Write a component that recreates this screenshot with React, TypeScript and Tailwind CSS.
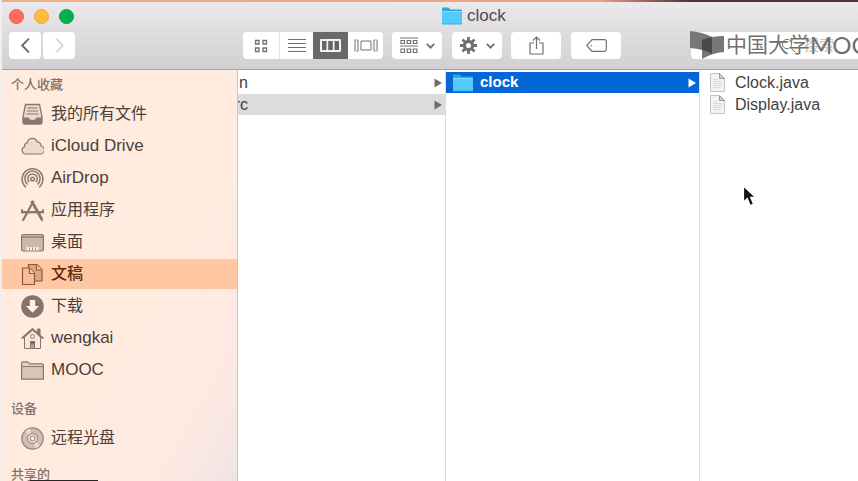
import type { ReactNode } from "react";

const svgBase = { fill: "none", stroke: "currentColor" } as const;

function FolderBlue() {
  return (
    <svg width="20" height="18" viewBox="0 0 20 18" className="shrink-0">
      <path d="M0 1.5Q0 .5 1 .5H6.5L8.5 2.5H19Q20 2.5 20 3.5V17Q20 17.5 19 17.5H1Q0 17.5 0 17Z" fill="#2ba9e0" />
      <path d="M0 4.5H20V16.5H0Z" fill="#55cbfb" />
      <path d="M0 4.5H20" stroke="#7fdcff" />
    </svg>
  );
}

function FileIcon() {
  return (
    <svg width="15" height="19" viewBox="0 0 15 19" className="shrink-0">
      <path d="M.5 .5H9.5L14.5 5.5V18.5H.5Z" fill="#f3f3f3" stroke="#c4c4c4" />
      <path d="M9.5 .5V5.5H14.5Z" fill="#d2d2d2" stroke="#999" />
      <path d="M3 6.5H8M3 8.5H12M3 10.5H12M3 12.5H12M3 14.5H10" stroke="#dadada" />
    </svg>
  );
}

function Triangle() {
  return (
    <svg width="8" height="10" viewBox="0 0 8 10" className="shrink-0" fill="currentColor">
      <path d="M.5 .5L8 5L.5 9.5Z" />
    </svg>
  );
}

function ChevronDown() {
  return (
    <svg width="9" height="6" viewBox="0 0 9 6" {...svgBase} strokeWidth="1.8">
      <path d="M.8 .8L4.5 4.6L8.2 .8" />
    </svg>
  );
}

const sideIcons: Record<string, ReactNode> = {
  all: (
    <>
      <path d="M4.5 1.5H18.5L21 14V19.5Q21 21 19.5 21H3.5Q2 21 2 19.5V14Z" fill="#eadacf" stroke="#8a766d" strokeWidth="1.3" />
      <path d="M2 14.5H7.5Q8.5 17 11.5 17T15.5 14.5H21V19.5Q21 21 19.5 21H3.5Q2 21 2 19.5Z" fill="#8a766d" />
      <path d="M6.5 5H16.5M6 8H17M5.5 11H17.5" stroke="#8a766d" />
    </>
  ),
  cloud: (
    <path d="M4.5 19H18.5A4 4 0 0 0 20 11A3.8 3.8 0 0 0 16.2 6.8A5.2 5.2 0 0 0 6.2 7.8A3.4 3.4 0 0 0 3.6 11.8A3.7 3.7 0 0 0 4.5 19Z" fill="#f0d9cc" stroke="#8a766d" strokeWidth="1.2" />
  ),
  airdrop: (
    <g fill="none" stroke="#8a766d" strokeWidth="1.5">
      <path d="M5 20.2A10.4 10.4 0 1 1 18 20.2" />
      <path d="M6.6 17.5A7.6 7.6 0 1 1 16.4 17.5" />
      <path d="M8.2 15A4.7 4.7 0 1 1 14.8 15" />
      <circle cx="11.5" cy="12" r="1.8" />
    </g>
  ),
  apps: (
    <g fill="none" stroke="#8a766d">
      <path d="M12.5 2L2.5 20.5" strokeWidth="2.2" />
      <path d="M10.5 2L21 20.5" strokeWidth="2.8" />
      <path d="M0 13.2H23" strokeWidth="2.4" />
      <path d="M1 13.5V10M22 13.5V10M1.4 22L3.4 18.5M21.6 22L19.6 18.5" strokeWidth="1.6" />
    </g>
  ),
  desktop: (
    <>
      <rect x=".6" y="3.5" width="21.8" height="16.5" rx="1.5" fill="#ccb8ac" stroke="#8a766d" strokeWidth="1.2" />
      <path d="M1 6H22" stroke="#8a766d" strokeWidth="1.3" />
      <path d="M5.5 16H17.5V19.4H5.5Z" fill="#fff1e8" />
      <path d="M8.5 16.5V19.4M11.5 16.5V19.4M14.5 16.5V19.4" stroke="#a08d83" />
    </>
  ),
  docs: (
    <g stroke="#8b5a3e" strokeWidth="1.2">
      <path d="M7.5 1.5H16L21 6.5V18H7.5Z" fill="#dba684" />
      <path d="M15.5 1.5V7H21" fill="#ffc9a5" />
      <path d="M1.5 5H8.5L13.5 10V21.5H1.5Z" fill="#f5be99" />
      <path d="M8.5 5V10.5H13.5" fill="#ffd5b8" />
    </g>
  ),
  download: (
    <>
      <circle cx="11.5" cy="11.5" r="11.3" fill="#85746b" />
      <path d="M8.8 5H14.2V11H18L11.5 17.8L5 11H8.8Z" fill="#fff4ec" />
    </>
  ),
  home: (
    <g stroke="#8a766d">
      <path d="M3.5 10L11.5 3L19.5 10V21.5H3.5Z" fill="#fae7dc" />
      <path d="M.8 11.5L11.5 2L22.2 11.5" fill="none" strokeWidth="2" />
      <path d="M16.5 2H19V8L16.5 6Z" fill="#8a766d" />
      <circle cx="11.5" cy="9.5" r="1.9" fill="#fff1e8" />
      <path d="M9.5 14.5H13.5V21.5H9.5Z" fill="#b5a197" />
      <path d="M9.5 14.5H13.5V17H9.5Z" fill="#77655b" />
    </g>
  ),
  folder: (
    <g stroke="#8a766d" strokeWidth="1.2">
      <path d="M.6 4Q.6 2.8 1.8 2.8H6.5L8.5 4.8H21.2Q22.4 4.8 22.4 6V20H.6Z" fill="#e6d3c7" />
      <path d="M.6 7.5H22.4V20H.6Z" fill="#d7c5ba" />
    </g>
  ),
  disc: (
    <g stroke="#9b877d">
      <circle cx="11.5" cy="11.5" r="10.7" fill="#cfbfb5" strokeWidth="1.3" />
      <path d="M11.5 11.5L4 4.5A10 10 0 0 1 9 1.7ZM11.5 11.5L19 18.5A10 10 0 0 1 14 21.3Z" fill="#eadcd3" stroke="none" />
      <circle cx="11.5" cy="11.5" r="5.2" fill="#dfd0c6" />
      <circle cx="11.5" cy="11.5" r="2.2" fill="#fff" />
    </g>
  ),
};

function SideItem({ icon, label, latin, active }: { icon: string; label: string; latin?: boolean; active?: boolean }) {
  return (
    <li>
      <a
        href="#"
        className={`flex h-[30px] items-center gap-[7px] pl-[19px] ${latin ? "text-[17px]" : "text-base"} ${
          active ? "bg-[#ffc8a2] font-medium text-[#5c2d12]" : "text-[#4b403b]"
        }`}
      >
        <svg width="23" height="23" viewBox="0 0 23 23" className="shrink-0">
          {sideIcons[icon]}
        </svg>
        {label}
      </a>
    </li>
  );
}

function SideHeading({ children }: { children: ReactNode }) {
  return <h2 className="flex h-7 items-center pl-[9px] text-[13px] font-medium text-[#7f716a]">{children}</h2>;
}

function Tool({ label, className, children }: { label: string; className: string; children: ReactNode }) {
  return (
    <button aria-label={label} className={`flex h-[27px] shrink-0 items-center justify-center ${className}`}>
      {children}
    </button>
  );
}

function Toolbar() {
  return (
    <div className="flex pl-[7px] text-[#707070]">
      <div className="flex gap-0.5">
        <Tool label="后退" className="w-8 rounded bg-white">
          <svg width="9" height="15" viewBox="0 0 9 15" {...svgBase} strokeWidth="1.9">
            <path d="M8 .5L1.2 7.5L8 14.5" />
          </svg>
        </Tool>
        <Tool label="前进" className="w-8 rounded bg-white text-[#d4d4d4]">
          <svg width="9" height="15" viewBox="0 0 9 15" {...svgBase} strokeWidth="1.7">
            <path d="M1 .5L7.8 7.5L1 14.5" />
          </svg>
        </Tool>
      </div>
      <div className="ml-[168px] flex overflow-hidden rounded bg-white">
        <Tool label="图标" className="w-[37px] border-r border-[#e6e6e6]">
          <svg width="14" height="14" viewBox="0 0 14 14" {...svgBase} strokeWidth="1.3">
            <path d="M1.5 1.5h3.5v3.5h-3.5zM9 1.5h3.5v3.5h-3.5zM1.5 9h3.5v3.5h-3.5zM9 9h3.5v3.5h-3.5z" />
          </svg>
        </Tool>
        <Tool label="列表" className="w-[33px]">
          <svg width="18" height="13" viewBox="0 0 18 13" {...svgBase}>
            <path d="M0 .5H18M0 4.5H18M0 8.5H18M0 12.5H18" />
          </svg>
        </Tool>
        <Tool label="分栏" className="w-[35px] bg-[#696969] text-white">
          <svg width="21" height="13" viewBox="0 0 21 13">
            <rect width="21" height="13" rx="1" fill="#f4f4f4" />
            <path d="M2 2H6.5V11H2ZM8.2 2H12.8V11H8.2ZM14.5 2H19V11H14.5Z" fill="#666" />
          </svg>
        </Tool>
        <Tool label="封面流" className="w-[35px]">
          <svg width="24" height="13" viewBox="0 0 24 13" {...svgBase}>
            <path d="M1 .5V12.5M2.5 1H4V12H2.5M7 2H17V11H7ZM21.5 1H20V12H21.5M23 .5V12.5" />
          </svg>
        </Tool>
      </div>
      <Tool label="排列" className="ml-[9px] w-[50px] gap-2 rounded bg-white">
        <svg width="18" height="17" viewBox="0 0 18 17" {...svgBase}>
          <path d="M0 1H18M0 9H18" />
          <path d="M1 3.5h3.5v3h-3.5zM7.2 3.5h3.5v3h-3.5zM13.4 3.5h3.5v3h-3.5zM1 12h3.5v3.5h-3.5zM7.2 12h3.5v3.5h-3.5zM13.4 12h3.5v3.5h-3.5z" strokeWidth="1.2" />
        </svg>
        <ChevronDown />
      </Tool>
      <Tool label="操作" className="ml-[10px] w-[50px] gap-[9px] rounded bg-white">
        <svg width="17" height="17" viewBox="-8.5 -8.5 17 17" {...svgBase}>
          <circle r="4.1" strokeWidth="3.2" />
          <path d="M0-5V-8.5M0 5V8.5M-5 0H-8.5M5 0H8.5M3.5-3.5L6-6M-3.5-3.5L-6-6M3.5 3.5L6 6M-3.5 3.5L-6 6" strokeWidth="2.8" />
        </svg>
        <ChevronDown />
      </Tool>
      <Tool label="共享" className="ml-[9px] w-[50px] rounded bg-white">
        <svg width="15" height="19" viewBox="0 0 15 19" {...svgBase} strokeWidth="1.2">
          <path d="M5 7H1V18H14V7H10M7.5 13V1M4 4.5L7.5 1L11 4.5" />
        </svg>
      </Tool>
      <Tool label="标签" className="ml-[10px] w-[50px] rounded bg-white">
        <svg width="21" height="13" viewBox="0 0 21 13" {...svgBase} strokeWidth="1.2">
          <path d="M6 .7H18.5Q20.3 .7 20.3 2.5V10.5Q20.3 12.3 18.5 12.3H6L.8 6.5Z" />
          <circle cx="5.5" cy="6.5" r=".8" fill="currentColor" stroke="none" />
        </svg>
      </Tool>
      <label className="ml-[70px] flex h-[27px] min-w-0 flex-1 items-center gap-2 rounded-l bg-white pl-[90px]">
        <svg width="15" height="15" viewBox="0 0 15 15" {...svgBase} className="shrink-0">
          <circle cx="6" cy="6" r="4.7" />
          <path d="M9.5 9.5L14 14" />
        </svg>
        <input aria-label="搜索" placeholder="搜索" className="min-w-0 flex-1 bg-transparent text-[15px] placeholder:text-[#c4c4c4]" />
      </label>
    </div>
  );
}

function Watermark() {
  return (
    <div className="pointer-events-none absolute top-[31px] left-[688px] flex items-center gap-[2px] text-[#707070]">
      <svg width="34" height="28" viewBox="0 0 34 28" className="shrink-0">
        <path d="M0 0Q12 1 22 6V23Q13 18 0 17Z" fill="#777" />
        <path d="M12 9Q22 5 34 5V21Q22 22 12 28Z" fill="#777" />
        <path d="M12 9Q17 7 22 6V23Q17 20 12 19Z" fill="#4a4a4a" />
      </svg>
      <span className="flex items-center leading-7 whitespace-nowrap">
        <span className="text-[21px]">中国大学</span>
        <span className="font-['Lato','Liberation_Sans',sans-serif] text-2xl leading-7">MOOC</span>
      </span>
    </div>
  );
}

export default function App() {
  return (
    <div className="h-screen overflow-hidden bg-[#efeff0] pl-0.5 font-['Liberation_Sans','Noto_Sans_CJK_SC',sans-serif]">
      <div className="relative flex h-full flex-col">
        <div className="h-0.5 shrink-0 bg-linear-to-r from-[#e9b184] from-10% via-[#eba184] via-70% to-[#54343a] to-80%" />
        <header className="h-[68px] shrink-0 border-b border-[#a5a3a6] bg-linear-to-b from-[#ebe9ec] to-[#d1cfd2]">
          <div className="flex h-[30px] items-center pb-0.5 pl-[7px]">
            <div className="flex gap-[10px]">
              <button aria-label="关闭" className="size-[15px] rounded-full border border-[#ed5f52] bg-[#ff6b5d]" />
              <button aria-label="最小化" className="size-[15px] rounded-full border border-[#efa935] bg-[#ffbb40]" />
              <button aria-label="缩放" className="size-[15px] rounded-full border border-[#08a143] bg-[#05b04b]" />
            </div>
            <h1 className="ml-[368px] flex items-center gap-[5px] text-[17px] text-[#4c4c4c]">
              <FolderBlue />
              clock
            </h1>
          </div>
          <Toolbar />
        </header>
        <div className="flex min-h-0 flex-1">
          <nav className="w-[236px] shrink-0 overflow-hidden border-r border-[#cbc4c1] bg-linear-to-br from-[#ffecdf] from-60% via-[#fde9e2] via-85% to-[#efe4e4] pt-px">
            <SideHeading>个人收藏</SideHeading>
            <ul className="flex flex-col gap-0.5">
              <SideItem icon="all" label="我的所有文件" />
              <SideItem icon="cloud" label="iCloud Drive" latin />
              <SideItem icon="airdrop" label="AirDrop" latin />
              <SideItem icon="apps" label="应用程序" />
              <SideItem icon="desktop" label="桌面" />
              <SideItem icon="docs" label="文稿" active />
              <SideItem icon="download" label="下载" />
              <SideItem icon="home" label="wengkai" latin />
              <SideItem icon="folder" label="MOOC" latin />
            </ul>
            <div className="pt-[10px]">
              <SideHeading>设备</SideHeading>
              <ul>
                <SideItem icon="disc" label="远程光盘" />
              </ul>
            </div>
            <div className="pt-2">
              <SideHeading>共享的</SideHeading>
            </div>
          </nav>
          <main className="flex min-w-0 flex-1 bg-white text-base text-[#3f3f3f]">
            <ul className="flex w-[208px] shrink-0 flex-col gap-px border-r border-[#dcdcdc] pt-0.5">
              {["n", "rc"].map((name, i) => (
                <li key={name}>
                  <button className={`flex h-[21px] w-full items-center justify-between pr-[3px] ${i === 1 ? "bg-[#dcdcdc]" : ""}`}>
                    <span className="flex w-[10px] justify-end overflow-hidden">{name}</span>
                    <span className="text-[#6e6e6e]">
                      <Triangle />
                    </span>
                  </button>
                </li>
              ))}
            </ul>
            <ul className="w-[254px] shrink-0 border-r border-[#dcdcdc] pt-0.5">
              <li>
                <button className="flex h-[21px] w-full items-center bg-[#0367d8] pr-[3px] pl-[7px] text-[15px] font-bold text-white">
                  <FolderBlue />
                  <span className="ml-[7px] flex-1 text-left">clock</span>
                  <Triangle />
                </button>
              </li>
            </ul>
            <ul className="flex min-w-0 flex-1 flex-col gap-px pt-0.5">
              {["Clock.java", "Display.java"].map((name) => (
                <li key={name}>
                  <button className="flex h-[21px] w-full items-center gap-[10px] pl-[10px]">
                    <FileIcon />
                    {name}
                  </button>
                </li>
              ))}
            </ul>
          </main>
        </div>
        <Watermark />
        <svg width="16" height="22" viewBox="0 0 16 22" className="absolute top-[185px] left-[740px]">
          <path d="M1.5 1V17L5.3 13.5L8.2 20.5L11.5 19L8.6 12.3H13.5Z" fill="#111" stroke="#fff" strokeWidth="1.2" />
        </svg>
        <div className="absolute bottom-0 left-7 h-px w-[68px] bg-[#252525]" />
      </div>
    </div>
  );
}
